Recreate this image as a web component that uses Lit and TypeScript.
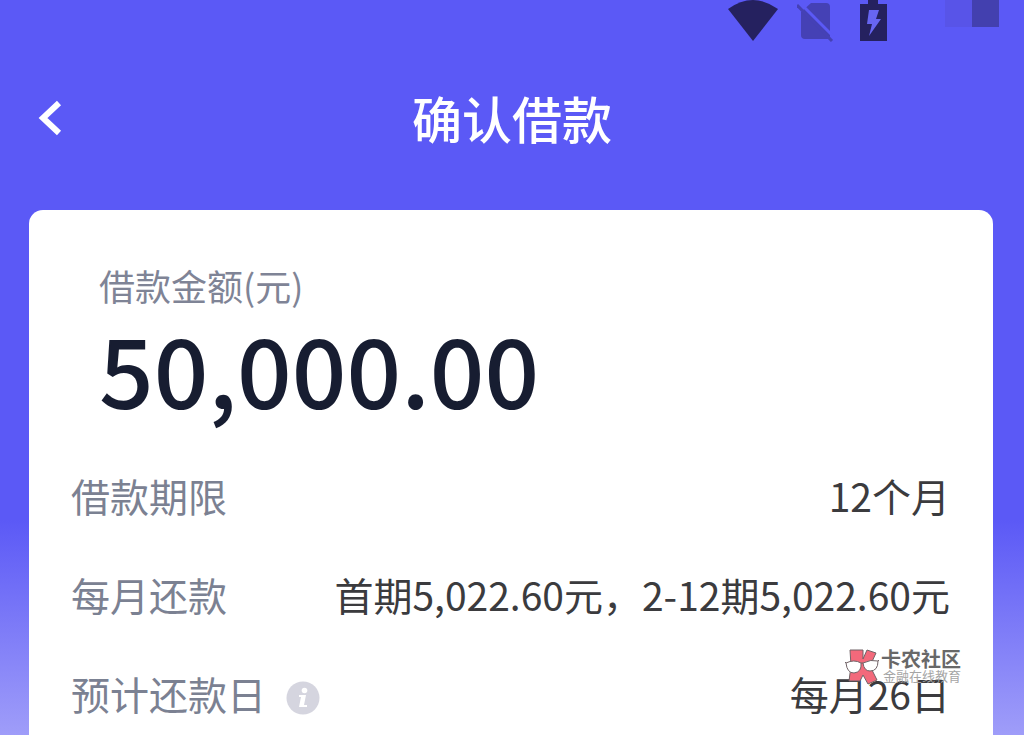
import { LitElement, html, css, svg } from "lit";
import { customElement } from "lit/decorators.js";

const wifiIcon = svg`<path d="M1 9 Q26 -9 51 9 L26 41Z" fill="#25215f"/>`;

@customElement("status-bar")
class StatusBar extends LitElement {
  static styles = css`
    :host {
      display: flex;
      justify-content: flex-end;
      align-items: flex-start;
      height: 42px;
      padding-right: 25px;
    }
    svg {
      display: block;
    }
    .wifi {
      margin-right: 16px;
    }
    .sim {
      margin-right: 24px;
    }
    .battery {
      margin-right: 55px;
    }
    .block {
      width: 27px;
      height: 27px;
      background: #5854e8;
    }
    .block.dark {
      background: #4340af;
    }
  `;

  render() {
    return html`
      <svg class="wifi" width="54" height="42" viewBox="0 0 54 42" aria-hidden="true">${wifiIcon}</svg>
      <svg class="sim" width="38" height="42" viewBox="0 0 38 42" aria-hidden="true">
        <path d="M14 3h15q4 0 4 4v29q0 3-3 3H8q-4 0-4-4V12z" fill="#4541b5" />
        <path d="M2 2l36 36" stroke="#5b59f6" stroke-width="3" />
        <path d="M0 5l35 36" stroke="#4541b5" stroke-width="3" />
      </svg>
      <svg class="battery" width="31" height="42" viewBox="0 0 31 42" aria-hidden="true">
        <path d="M9 0h10v4h9v37H1V4h8z" fill="#25215f" />
        <path d="M10 10h10l-3 9h5L10 36l3-12H8z" fill="#6765f2" />
      </svg>
      <span class="block"></span>
      <span class="block dark"></span>
    `;
  }
}

@customElement("community-mark")
class CommunityMark extends LitElement {
  static styles = css`
    :host {
      display: flex;
      align-items: flex-start;
      gap: 2px;
      color: #686868;
    }
    svg {
      display: block;
      flex: none;
    }
    .names {
      display: flex;
      flex-direction: column;
      white-space: nowrap;
    }
    .name {
      font-size: 20px;
      line-height: 20px;
      font-weight: 700;
    }
    .tagline {
      padding-left: 2px;
      font-size: 13px;
      line-height: 13px;
      color: #a5a5a5;
    }
  `;

  render() {
    return html`
      <svg width="34" height="36" viewBox="0 0 34 36" aria-hidden="true">
        <path
          d="M5 1h13v9l4-9 9 3-6 13 7 14-9 4-5-9-3 6H4l2-15z"
          fill="#f3697b"
          stroke="#716367"
          stroke-linejoin="round"
        />
        <g fill="#fff" stroke="#716367">
          <path d="M1 14q8-4 15 0 1 9-7 10-7 0-8-10z" />
          <path d="M18 14q8-4 15-2 0 10-8 10-6 0-7-8z" />
        </g>
        <path d="M0 13l1 1M16 14h2M33 12l1-1" fill="none" stroke="#716367" />
      </svg>
      <div class="names">
        <span class="name">卡农社区</span>
        <span class="tagline">金融在线教育</span>
      </div>
    `;
  }
}

@customElement("app-root")
class AppRoot extends LitElement {
  static styles = css`
    :host {
      display: flex;
      flex-direction: column;
      box-sizing: border-box;
      min-height: 100vh;
      background: linear-gradient(#5b59f6 0, #5b59f6 520px, #9f9df9 735px);
      font-family: "Noto Sans CJK SC", sans-serif;
    }
    .header {
      display: grid;
      grid-template-columns: 100px 1fr 100px;
      align-items: center;
      height: 152px;
      margin-bottom: 16px;
    }
    .back {
      display: flex;
      align-items: center;
      width: 100px;
      height: 72px;
      padding: 0 0 0 38px;
      border: 0;
      background: none;
      cursor: pointer;
    }
    .title {
      margin: 0;
      padding-bottom: 2px;
      text-align: center;
      color: #fff;
      font-size: 50px;
      line-height: 72px;
      font-weight: 500;
    }
    .card {
      position: relative;
      flex: 1;
      box-sizing: border-box;
      margin: 0 31px 0 29px;
      padding: 47px 43px 8px 42px;
      border-radius: 14px 14px 0 0;
      background: #fff;
    }
    .amount {
      margin: 0 0 44px 28px;
    }
    .amount-label {
      margin: 0;
      color: #7f8496;
      font-size: 36px;
      line-height: 56px;
    }
    .amount-value {
      margin: 0;
      color: #171d31;
      font-size: 96px;
      line-height: 110px;
      font-weight: 500;
    }
    .rows {
      display: flex;
      flex-direction: column;
      gap: 43px;
      margin: 0;
    }
    .row {
      display: flex;
      justify-content: space-between;
      font-size: 39px;
      line-height: 56px;
    }
    .row dt {
      display: flex;
      align-items: center;
      gap: 20px;
      color: #7b8192;
    }
    .row dd {
      margin: 0;
      color: #3b3b3e;
    }
    .info {
      display: flex;
      padding: 10px 0 0;
      border: 0;
      background: none;
      cursor: pointer;
    }
    .mark {
      position: absolute;
      right: 32px;
      bottom: 50px;
    }
  `;

  render() {
    return html`
      <status-bar></status-bar>
      <header class="header">
        <button class="back" aria-label="返回">
          <svg width="24" height="36" viewBox="0 0 24 36" aria-hidden="true">
            <path d="M21 3L5 18l16 15" fill="none" stroke="#fff" stroke-width="6" />
          </svg>
        </button>
        <h1 class="title">确认借款</h1>
      </header>
      <main class="card">
        <section class="amount">
          <p class="amount-label">借款金额(元)</p>
          <p class="amount-value">50,000.00</p>
        </section>
        <dl class="rows">
          <div class="row">
            <dt>借款期限</dt>
            <dd>12个月</dd>
          </div>
          <div class="row">
            <dt>每月还款</dt>
            <dd>首期5,022.60元，2-12期5,022.60元</dd>
          </div>
          <div class="row">
            <dt>
              预计还款日
              <button class="info" aria-label="说明">
                <svg width="34" height="34" viewBox="0 0 34 34" aria-hidden="true">
                  <circle cx="17" cy="17" r="16.5" fill="#d5d5df" />
                  <circle cx="18.500" cy="9.500" r="2.800" fill="#fff" />
                  <path d="M13 14h7l-2 10h3v2h-8l2-10h-2z" fill="#fff" />
                </svg>
              </button>
            </dt>
            <dd>每月26日</dd>
          </div>
        </dl>
        <community-mark class="mark"></community-mark>
      </main>
    `;
  }
}
